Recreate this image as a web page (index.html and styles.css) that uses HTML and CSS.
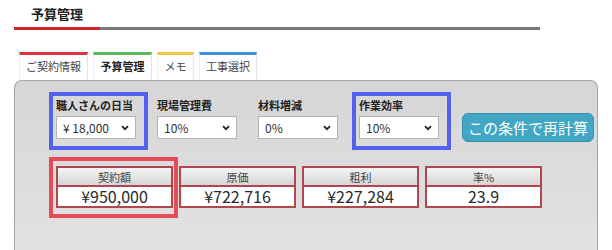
FILE: index.html
```html
<!DOCTYPE html>
<html lang="ja">
<head>
<meta charset="utf-8">
<title>予算管理</title>
<link rel="stylesheet" href="styles.css">
</head>
<body>
<header class="page-head">
  <h1 class="page-title">予算管理</h1>
  <div class="rule"><span class="rule-accent"></span></div>
</header>
<nav class="tabs">
  <div class="tab tab-red">ご契約情報</div>
  <div class="tab tab-green tab-active">予算管理</div>
  <div class="tab tab-yellow">メモ</div>
  <div class="tab tab-blue">工事選択</div>
</nav>
<section class="panel">
  <div class="controls">
    <div class="field field-marked">
      <div class="field-label">職人さんの日当</div>
      <div class="select"><span>¥ 18,000</span><svg class="chev" viewBox="0 0 8 6" width="8" height="6"><path d="M1 1.2 L4 4.2 L7 1.2" fill="none" stroke="#222" stroke-width="1.8"/></svg></div>
    </div>
    <div class="field">
      <div class="field-label">現場管理費</div>
      <div class="select"><span>10%</span><svg class="chev" viewBox="0 0 8 6" width="8" height="6"><path d="M1 1.2 L4 4.2 L7 1.2" fill="none" stroke="#222" stroke-width="1.8"/></svg></div>
    </div>
    <div class="field">
      <div class="field-label">材料増減</div>
      <div class="select"><span>0%</span><svg class="chev" viewBox="0 0 8 6" width="8" height="6"><path d="M1 1.2 L4 4.2 L7 1.2" fill="none" stroke="#222" stroke-width="1.8"/></svg></div>
    </div>
    <div class="field field-marked">
      <div class="field-label">作業効率</div>
      <div class="select"><span>10%</span><svg class="chev" viewBox="0 0 8 6" width="8" height="6"><path d="M1 1.2 L4 4.2 L7 1.2" fill="none" stroke="#222" stroke-width="1.8"/></svg></div>
    </div>
    <button class="recalc">この条件で再計算</button>
  </div>
  <div class="cards">
    <div class="card card-marked">
      <div class="card-head">契約額</div>
      <div class="card-value">¥950,000</div>
    </div>
    <div class="card">
      <div class="card-head">原価</div>
      <div class="card-value">¥722,716</div>
    </div>
    <div class="card">
      <div class="card-head">粗利</div>
      <div class="card-value">¥227,284</div>
    </div>
    <div class="card">
      <div class="card-head">率%</div>
      <div class="card-value">23.9</div>
    </div>
  </div>
</section>
</body>
</html>
```
FILE: styles.css
```css
* { box-sizing: border-box; }
html, body { margin: 0; padding: 0; }
body {
  width: 612px;
  height: 250px;
  overflow: hidden;
  background: #fff;
  font-family: "Noto Sans CJK JP", "Noto Sans", sans-serif;
  color: #222;
}
.page-head { padding: 6px 0 0 0; }
.page-title {
  margin: 0 0 5px 31px;
  font-size: 13px;
  line-height: 16px;
  font-weight: 700;
  color: #222;
}
.rule {
  margin-left: 14px;
  width: 526px;
  height: 3px;
  background: #777;
}
.rule-accent {
  display: block;
  width: 86px;
  height: 3px;
  background: #d2232c;
}
.tabs {
  display: flex;
  gap: 5px;
  margin: 22px 0 0 19px;
  height: 28px;
}
.tab {
  background: #fff;
  border-top: 3px solid #ccc;
  border-right: 1px solid #e2e2e2;
  border-left: 1px solid #f0f0f0;
  font-size: 11px;
  line-height: 18px;
  padding: 2px 0 0 0;
  text-align: center;
  color: #444;
}
.tab-red { border-top-color: #d9353e; width: 69px; }
.tab-green { border-top-color: #5cb85c; width: 59px; }
.tab-yellow { border-top-color: #f2c744; width: 37px; }
.tab-blue { border-top-color: #3d8fe0; width: 58px; }
.tab-active { font-weight: 700; color: #222; }
.panel {
  margin-left: 14px;
  width: 584px;
  height: 170px;
  border: 1px solid #a4a4a4;
  border-bottom: none;
  border-radius: 8px 8px 0 0;
  background: linear-gradient(#d6d6d6, #e2e2e2);
  padding: 11px 0 0 34px;
}
.controls {
  display: flex;
  align-items: flex-start;
  gap: 2px;
}
.field {
  width: 99px;
  border: 4px solid transparent;
  padding: 2px 8px 7px 3px;
}
.field-marked { border-color: #5461ef; }
.field-label {
  font-size: 11px;
  line-height: 14px;
  font-weight: 700;
  color: #222;
  margin-bottom: 4px;
  white-space: nowrap;
}
.select {
  width: 80px;
  height: 23px;
  background: #fff;
  border: 1px solid #b4b4b4;
  display: flex;
  align-items: center;
  justify-content: space-between;
  padding: 0 6px 0 6px;
  font-size: 12px;
  color: #333;
}
.chev { display: block; }
.recalc {
  margin: 21px 0 0 9px;
  width: 132px;
  height: 29px;
  border: 1px solid #3592ad;
  border-radius: 6px;
  background: #42a7c4;
  color: #fff;
  font-family: "Noto Sans CJK JP", sans-serif;
  font-size: 15px;
  line-height: 27px;
  padding: 0;
  white-space: nowrap;
}
.cards {
  display: flex;
  gap: 6px;
  margin: 16px 0 0 7px;
}
.card {
  position: relative;
  width: 117px;
  border: 2px solid #b0464e;
  background: #fff;
}
.card-marked::after {
  content: "";
  position: absolute;
  left: -9px;
  right: -7px;
  top: -11px;
  bottom: -12px;
  border: 4px solid #e84b58;
}
.card-head {
  height: 19px;
  line-height: 18px;
  font-size: 11px;
  text-align: center;
  color: #444;
  background: linear-gradient(#f4f4f4, #d6d6d6);
  border-bottom: 2px solid #b0464e;
}
.card-value {
  height: 19px;
  line-height: 19px;
  font-size: 16px;
  text-align: center;
  color: #2a2a2a;
}
```
